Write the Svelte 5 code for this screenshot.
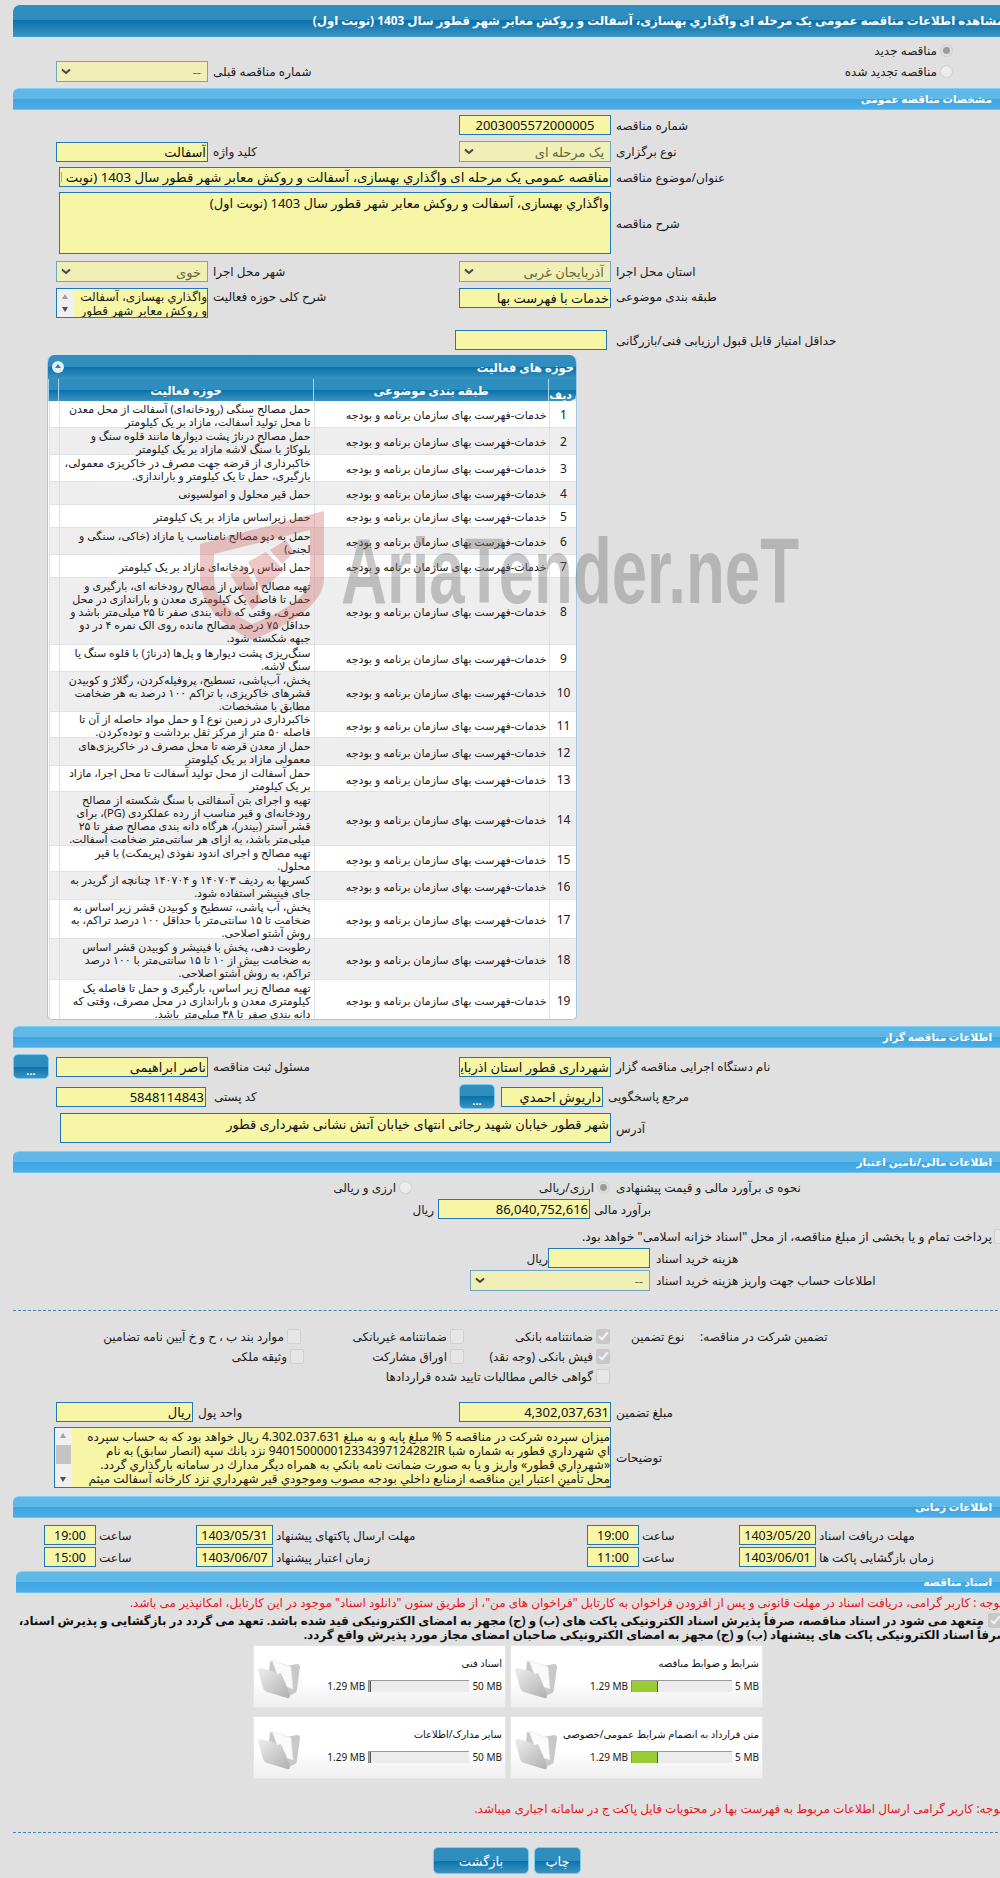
<script>
  const category = 'خدمات-فهرست بهای سازمان برنامه و بودجه';

  // each row keeps the same line breaks as the page
  const activities = [
    { h: 27, lines: ['حمل مصالح سنگی (رودخانه‌ای) آسفالت از محل معدن', 'تا محل تولید آسفالت، مازاد بر یک کیلومتر'] },
    { h: 27, lines: ['حمل مصالح درناژ پشت دیوارها مانند قلوه سنگ و', 'بلوکاژ با سنگ لاشه مازاد بر یک کیلومتر'] },
    { h: 27, lines: ['خاکبرداری از قرضه  جهت مصرف در خاکریزی معمولی،', 'بارگیری، حمل تا یک کیلومتر و باراندازی.'] },
    { h: 23, lines: ['حمل قیر محلول و امولسیونی'] },
    { h: 23, lines: ['حمل زیراساس مازاد بر یک کیلومتر'] },
    { h: 27, lines: ['حمل به دپو مصالح نامناسب یا مازاد (خاکی، سنگی و', 'لجنی)'] },
    { h: 23, lines: ['حمل اساس رودخانه‌ای مازاد بر یک کیلومتر'] },
    { h: 67, lines: ['تهیه مصالح اساس از مصالح رودخانه ای، بارگیری و', 'حمل تا فاصله یک کیلومتری معدن و باراندازی در محل', 'مصرف، وقتی که دانه بندی صفر تا ۲۵ میلی‌متر باشد و', 'حداقل ۷۵ درصد مصالح مانده روی الک نمره ۴ در دو', 'جبهه  شکسته شود.'] },
    { h: 27, lines: ['سنگ‌ریزی پشت دیوارها و پل‌ها (درناژ) با قلوه سنگ یا', 'سنگ لاشه.'] },
    { h: 40, lines: ['پخش، آب‌پاشی، تسطیح، پروفیله‌کردن، رگلاژ و کوبیدن', 'قشرهای خاکریزی، با تراکم ۱۰۰ درصد به هر ضخامت', 'مطابق با مشخصات.'] },
    { h: 26, lines: ['خاکبرداری در زمین نوع I و حمل مواد حاصله از آن تا', 'فاصله ۵۰ متر از مرکز ثقل برداشت و توده‌کردن.'] },
    { h: 28, lines: ['حمل از معدن قرضه تا محل مصرف در خاکریزی‌های', 'معمولی مازاد بر یک کیلومتر'] },
    { h: 26, lines: ['حمل آسفالت از محل تولید آسفالت تا محل اجرا، مازاد', 'بر یک کیلومتر'] },
    { h: 54, lines: ['تهیه و اجرای بتن آسفالتی با سنگ شکسته از مصالح', 'رودخانه‌ای و قیر مناسب از رده عملکردی (PG)، برای', 'قشر آستر (بیندر)، هرگاه دانه بندی مصالح صفر تا ۲۵', 'میلی‌متر باشد، به ازای هر سانتی‌متر ضخامت آسفالت.'] },
    { h: 26, lines: ['تهیه مصالح و اجرای اندود نفوذی (پریمکت) با قیر', 'محلول.'] },
    { h: 28, lines: ['کسریها به ردیف ۱۴۰۷۰۳ و ۱۴۰۷۰۴ چنانچه از گریدر به', 'جای فینیشر استفاده شود.'] },
    { h: 39, lines: ['پخش، آب پاشی، تسطیح و کوبیدن قشر زیر اساس به', 'ضخامت تا ۱۵ سانتی‌متر با حداقل ۱۰۰ درصد تراکم، به', 'روش آشتو اصلاحی.'] },
    { h: 41, lines: ['رطوبت دهی، پخش با فینیشر  و کوبیدن قشر اساس', 'به ضخامت بیش از ۱۰ تا ۱۵ سانتی‌متر با ۱۰۰ درصد', 'تراکم، به روش آشتو اصلاحی.'] },
    { h: 40, lines: ['تهیه مصالح زیر اساس، بارگیری و حمل تا فاصله یک', 'کیلومتری معدن و باراندازی در محل مصرف، وقتی که', 'دانه بندی صفر تا ۳۸ میلی‌متر باشد.'] },
  ];

  const docs = [
    { title: 'اسناد فنی', max: '50 MB', pct: 3 },
    { title: 'شرایط و ضوابط مناقصه', max: '5 MB', pct: 27 },
    { title: 'سایر مدارک/اطلاعات', max: '50 MB', pct: 3 },
    { title: 'متن قرارداد به انضمام شرایط عمومی/خصوصی', max: '5 MB', pct: 27 },
  ];

  const guarantee = [
    [{ t: 'ضمانتنامه بانکی', on: true }, { t: 'ضمانتنامه غیربانکی' }, { t: 'موارد بند ب ، ح و خ آیین نامه تضامین' }],
    [{ t: 'فیش بانکی (وجه نقد)', on: true }, { t: 'اوراق مشارکت' }, { t: 'وثیقه ملکی' }],
    [{ t: 'گواهی خالص مطالبات تایید شده قراردادها' }],
  ];
</script>

{#snippet chevron()}
  <svg class="chev" viewBox="0 0 10 7" width="10" height="7"><path d="M1 1.5 L5 5 L9 1.5" fill="none" stroke="#444" stroke-width="2" /></svg>
{/snippet}

{#snippet folder()}
  <svg class="folder" viewBox="0 0 44 40" width="44" height="40">
    <defs>
      <linearGradient id="fold" x1="0" y1="0" x2="1" y2="1">
        <stop offset="0" stop-color="#eeeeee" />
        <stop offset="1" stop-color="#b0b0b0" />
      </linearGradient>
    </defs>
    <path d="M13 2 L30 7 L40 5 Q43 5 43 8 L40 30 Q40 33 38 34 L30 38 L12 12 Z" fill="#c8c8c8" />
    <path d="M15 1 L34 8 L36 30 L24 26 Z" fill="#fafafa" stroke="#e4e4e4" stroke-width="0.6" />
    <path d="M1 11 Q1 9 4 9 L15 12 Q18 13 20 15 L24 14 Q29 24 33 37 Q33 40 30 39 L10 33 Q7 32 6 29 Z" fill="url(#fold)" />
  </svg>
{/snippet}

<div class="page" dir="ltr">
  <div class="sheet">
    <h1 class="title-bar" dir="rtl">مشاهده اطلاعات مناقصه عمومی یک مرحله ای واگذاري بهسازی، آسفالت و روکش معابر شهر قطور سال 1403 (نوبت اول)</h1>

    <div class="radio-top" dir="rtl">
      <span class="radio on"></span><span>مناقصه جدید</span>
    </div>
    <div class="renew">
      <div class="select">{@render chevron()}<span>--</span></div>
      <div class="renew-right">
        <span class="label" dir="rtl">شماره مناقصه قبلی</span>
        <div class="radio-line" dir="rtl"><span class="radio"></span><span>مناقصه تجدید شده</span></div>
      </div>
    </div>

    <h2 class="section" dir="rtl">مشخصات مناقصه عمومی</h2>

    <div class="form">
      <div class="row">
        <span></span><span></span>
        <input class="field ltr-num" readonly value="2003005572000005" />
        <span class="label" dir="rtl">شماره مناقصه</span>
      </div>
      <div class="row">
        <input class="field" dir="rtl" readonly value="آسفالت" />
        <span class="label" dir="rtl">کلید واژه</span>
        <div class="select" dir="ltr">{@render chevron()}<span dir="rtl">یک مرحله ای</span></div>
        <span class="label" dir="rtl">نوع برگزاری</span>
      </div>
      <div class="row tight">
        <input class="field wide subject" dir="rtl" readonly value="مناقصه عمومی یک مرحله ای واگذاري بهسازی، آسفالت و روکش معابر شهر قطور سال 1403 (نوبت اول)" />
        <span class="label" dir="rtl">عنوان/موضوع مناقصه</span>
      </div>
      <div class="row tight">
        <div class="field wide area desc" dir="rtl">واگذاري بهسازی، آسفالت و روکش معابر شهر قطور سال 1403 (نوبت اول)</div>
        <span class="label" dir="rtl">شرح مناقصه</span>
      </div>
      <div class="row loose">
        <div class="select">{@render chevron()}<span dir="rtl">خوی</span></div>
        <span class="label" dir="rtl">شهر محل اجرا</span>
        <div class="select">{@render chevron()}<span dir="rtl">آذربایجان غربی</span></div>
        <span class="label" dir="rtl">استان محل اجرا</span>
      </div>
      <div class="row top">
        <div class="listbox">
          <div class="scroll small"><i class="up"></i><i class="down"></i></div>
          <div class="list-text" dir="rtl">واگذاري بهسازی، آسفالت<br />و روکش معابر شهر قطور</div>
        </div>
        <span class="label" dir="rtl">شرح کلی حوزه فعالیت</span>
        <input class="field" dir="rtl" readonly value="خدمات با فهرست بها" />
        <span class="label" dir="rtl">طبقه بندی موضوعی</span>
      </div>
      <div class="row score-row">
        <span></span><span></span>
        <input class="field score" readonly value="" />
        <span class="label" dir="rtl">حداقل امتیاز قابل قبول ارزیابی فنی/بازرگانی</span>
      </div>
    </div>

    <section class="panel">
      <div class="panel-head" dir="rtl">
        <span>حوزه های فعالیت</span>
        <span class="toggle"></span>
      </div>
      <table dir="rtl">
        <colgroup>
          <col class="c-num" /><col class="c-cat" /><col class="c-act" /><col class="c-gap" />
        </colgroup>
        <thead>
          <tr>
            <th class="th-num">ردیف</th>
            <th>طبقه بندی موضوعی</th>
            <th>حوزه فعالیت</th>
            <th></th>
          </tr>
        </thead>
        <tbody>
          {#each activities as a, i}
            <tr class:alt={i % 2 === 1} style="height: {a.h}px">
              <td class="num">{i + 1}</td>
              <td class="cat">{category}</td>
              <td class="act">{#each a.lines as line}<div>{line}</div>{/each}</td>
              <td></td>
            </tr>
          {/each}
        </tbody>
      </table>
    </section>

    <h2 class="section mt-6" dir="rtl">اطلاعات مناقصه گزار</h2>

    <div class="org">
      <div class="org-row">
        <button class="btn dots">...</button>
        <input class="field f152" dir="rtl" readonly value="ناصر ابراهیمی" />
        <span class="label gap-left" dir="rtl">مسئول ثبت مناقصه</span>
        <input class="field f152" dir="rtl" readonly value="شهرداری قطور استان اذربایجان غربی" />
        <span class="label" dir="rtl">نام دستگاه اجرایی مناقصه گزار</span>
      </div>
      <div class="org-row two">
        <input class="field postal" dir="rtl" readonly value="5848114843" />
        <span class="label gap-left2" dir="rtl">کد پستی</span>
        <button class="btn dots">...</button>
        <input class="field f102" dir="rtl" readonly value="داریوش احمدي" />
        <span class="label" dir="rtl">مرجع پاسخگویی</span>
      </div>
      <div class="row address">
        <div class="field wide area addr" dir="rtl">شهر قطور خیابان شهید رجائی انتهای خیابان آتش نشانی شهرداری قطور</div>
        <span class="label" dir="rtl">آدرس</span>
      </div>
    </div>

    <h2 class="section mt-8" dir="rtl">اطلاعات مالی/تامین اعتبار</h2>

    <div class="money">
      <div class="est-type">
        <div class="radio-line" dir="rtl"><span class="radio"></span><span>ارزی و ریالی</span></div>
        <div class="radio-line" dir="rtl"><span class="radio on"></span><span>ارزی/ریالی</span></div>
        <span class="label" dir="rtl">نحوه ی برآورد مالی و قیمت پیشنهادی</span>
      </div>
      <div class="est-amount">
        <span class="rial" dir="rtl">ریال</span>
        <input class="field f152" dir="rtl" readonly value="86,040,752,616" />
        <span class="label" dir="rtl">برآورد مالی</span>
      </div>
      <div class="treasury" dir="rtl">
        <span class="check"></span>
        <span>پرداخت تمام و یا بخشی از مبلغ مناقصه، از محل "اسناد خزانه اسلامی" خواهد بود.</span>
      </div>
      <div class="fee">
        <span class="rial" dir="rtl">ریال</span>
        <input class="field f102" readonly value="" />
        <span class="label" dir="rtl">هزینه خرید اسناد</span>
      </div>
      <div class="fee account">
        <div class="select f180">{@render chevron()}<span>--</span></div>
        <span class="label" dir="rtl">اطلاعات حساب جهت واریز هزینه خرید اسناد</span>
      </div>
    </div>

    <div class="dash"></div>

    <div class="guarantee">
      {#each guarantee as line, r}
        <div class="g-line">
          {#each line as item}
            <div class="g-item" dir="rtl">
              <span class="check" class:on={item.on}></span><span>{item.t}</span>
            </div>
          {/each}
          {#if r === 0}
            <span class="label g-kind" dir="rtl">نوع تضمین</span>
            <span class="label g-head" dir="rtl">تضمین شرکت در مناقصه:</span>
          {/if}
        </div>
      {/each}
    </div>

    <div class="form amount">
      <div class="row">
        <input class="field unit" dir="rtl" readonly value="ریال" />
        <span class="label unit-label" dir="rtl">واحد پول</span>
        <input class="field" dir="rtl" readonly value="4,302,037,631" />
        <span class="label" dir="rtl">مبلغ تضمین</span>
      </div>
      <div class="row tight">
        <div class="notes">
          <div class="scroll"><i class="up"></i><b></b><i class="down"></i></div>
          <div class="notes-text" dir="rtl">
            <div>میزان سپرده شرکت در مناقصه 5 % مبلغ پایه و به مبلغ 4.302.037.631 ریال خواهد بود که به حساب سپرده</div>
            <div>اي شهرداري قطور به شماره شبا 940150000012334397124282IR نزد بانك سپه (انصار سابق) به نام</div>
            <div>«شهرداري قطور» واريز و يا به صورت ضمانت نامه بانكي به همراه ديگر مدارك در سامانه بارگذاري گردد.</div>
            <div>محل تأمين اعتبار اين مناقصه ازمنابع داخلي بودجه مصوب وموجودي قير شهرداري نزد كارخانه آسفالت ميثم</div>
            <div>آسفالت تأمين خواهد شد.</div>
          </div>
        </div>
        <span class="label" dir="rtl">توضیحات</span>
      </div>
    </div>

    <h2 class="section mt-8" dir="rtl">اطلاعات زمانی</h2>

    <div class="times">
      <div class="time-row">
        <input class="time" readonly value="19:00" />
        <span class="label t-hour" dir="rtl">ساعت</span>
        <input class="date" readonly value="1403/05/31" />
        <span class="label t-left" dir="rtl">مهلت ارسال پاکتهای پیشنهاد</span>
        <input class="time" readonly value="19:00" />
        <span class="label t-hour" dir="rtl">ساعت</span>
        <input class="date" readonly value="1403/05/20" />
        <span class="label" dir="rtl">مهلت دریافت اسناد</span>
      </div>
      <div class="time-row">
        <input class="time" readonly value="15:00" />
        <span class="label t-hour" dir="rtl">ساعت</span>
        <input class="date" readonly value="1403/06/07" />
        <span class="label t-left" dir="rtl">زمان اعتبار پیشنهاد</span>
        <input class="time" readonly value="11:00" />
        <span class="label t-hour" dir="rtl">ساعت</span>
        <input class="date" readonly value="1403/06/01" />
        <span class="label" dir="rtl">زمان بازگشایی پاکت ها</span>
      </div>
    </div>

    <h2 class="section docs-bar" dir="rtl">اسناد مناقصه</h2>

    <p class="note red note-top" dir="rtl">توجه : کاربر گرامی، دریافت اسناد در مهلت قانونی و پس از افزودن فراخوان به کارتابل "فراخوان های من"، از طریق ستون "دانلود اسناد" موجود در این کارتابل، امکانپذیر می باشد.</p>
    <div class="pledge" dir="rtl">
      <div class="pledge-line"><span class="check on"></span><span>متعهد می شود در اسناد مناقصه، صرفاً پذیرش اسناد الکترونیکی پاکت های (ب) و (ج) مجهز به امضای الکترونیکی قید شده باشد. تعهد می گردد در بازگشایی و پذیرش اسناد،</span></div>
      <div class="pledge-line">صرفاً اسناد الکترونیکی پاکت های پیشنهاد (ب) و (ج) مجهز به امضای الکترونیکی صاحبان امضای مجاز مورد پذیرش واقع گردد.</div>
    </div>

    <div class="cards">
      {#each docs as doc}
        <div class="card">
          {@render folder()}
          <div class="card-body">
            <div class="card-title" dir="rtl">{doc.title}</div>
            <div class="usage">
              <span>1.29 MB</span>
              <div class="track"><div class="used" style="width: {doc.pct}%"></div></div>
              <span>{doc.max}</span>
            </div>
          </div>
        </div>
      {/each}
    </div>

    <p class="note red note-end" dir="rtl">توجه: کاربر گرامی ارسال اطلاعات مربوط به فهرست بها در محتویات فایل پاکت ج در سامانه اجباری میباشد.</p>

    <div class="dash bottom"></div>

    <div class="actions">
      <button class="btn back">بازگشت</button>
      <button class="btn print">چاپ</button>
    </div>
  </div>

  <!-- site watermark sits over the table -->
  <svg class="mark" viewBox="0 0 610 140" width="610" height="140">
    <path fill="rgba(205,90,90,0.34)" fill-rule="evenodd" d="M0 36 L124 3 L124 72 Q122 104 52 132 Q2 108 0 72 Z M14 46 L14 72 Q16 98 52 116 Q108 94 110 72 L110 22 Z" />
    <path fill="rgba(205,90,90,0.34)" d="M30 66 L44 58 L62 92 L52 102 Z M48 54 L66 44 L84 62 L62 82 Z M70 42 L86 32 L94 44 L82 56 Z" />
    <text x="141" y="95" textLength="458" lengthAdjust="spacingAndGlyphs">AriaTender.neT</text>
  </svg>
</div>

<style>
  :global(body) {
    margin: 0;
    background: #e0e0e0;
  }

  .page {
    position: relative;
    width: 1000px;
    height: 1878px;
    overflow: hidden;
    font-family: "Noto Sans", "DejaVu Sans", sans-serif;
    font-size: 12px;
    color: #1a1a1a;
  }

  .sheet {
    margin-left: 13px;
    width: 995px;
    padding-top: 5px;
  }

  .title-bar {
    margin: 0;
    height: 32px;
    box-sizing: border-box;
    padding: 0 4px 0 0;
    line-height: 30px;
    font-size: 11.8px;
    font-weight: 700;
    color: #fff;
    white-space: nowrap;
    overflow: hidden;
    border-radius: 7px 0 0 0;
    border-bottom: 1px solid #3a9ee0;
    background: linear-gradient(#2d8fc0 0, #2f8dbd 50%, #0a71aa 50%, #3b93c0 100%);
  }

  .section {
    margin: 6px 0 0;
    height: 22px;
    box-sizing: border-box;
    padding-right: 16px;
    line-height: 20px;
    font-size: 10.5px;
    font-weight: 700;
    color: #fff;
    border-radius: 6px 0 0 0;
    border-top: 1px solid #7dd3f3;
    border-bottom: 1px solid #6cc4ee;
    background: linear-gradient(#5fb8e8 0, #60b8e8 50%, #3ea4e2 50%, #4aaee6 100%);
  }

  .mt-6 { margin-top: 6px; }
  .mt-8 { margin-top: 8px; }

  .radio-top {
    display: flex;
    align-items: center;
    gap: 3px;
    height: 14px;
    margin-top: 6px;
    padding-right: 55px;
  }

  .radio {
    flex-shrink: 0;
    width: 11px;
    height: 11px;
    border: 1px solid #cfcfcf;
    border-radius: 50%;
    background: #ececec;
  }

  .radio.on {
    background: radial-gradient(circle, #9a9a9a 0 3px, #dedede 4px);
  }

  .radio-line {
    display: flex;
    align-items: center;
    gap: 3px;
    white-space: nowrap;
  }

  .renew {
    display: grid;
    grid-template-columns: 152px 1fr;
    margin: 4px 0 0 43px;
    height: 21px;
  }

  .renew-right {
    display: flex;
    justify-content: space-between;
    align-items: center;
    padding: 0 55px 0 5px;
  }

  .select {
    display: flex;
    justify-content: space-between;
    align-items: center;
    height: 21px;
    box-sizing: border-box;
    padding: 0 6px 0 4px;
    border: 1px solid #6fa3c8;
    background: #f0efb6;
    color: #66663f;
    font-size: 13px;
  }

  .chev { flex-shrink: 0; }

  .field {
    display: block;
    width: 100%;
    height: 20px;
    box-sizing: border-box;
    margin: 0;
    padding: 0 1px;
    border: 1px solid #1f77b4;
    border-radius: 0;
    outline: none;
    background: #f7f5a6;
    color: #111;
    font: inherit;
    font-size: 13px;
  }

  .subject { font-size: 13.3px; }

  .ltr-num {
    text-align: center;
    font-size: 13px;
  }

  .form {
    display: flex;
    flex-direction: column;
    gap: 6px;
    padding: 5px 0 0 43px;
  }

  .row {
    display: grid;
    grid-template-columns: 152px 251px 152px 1fr;
    align-items: center;
  }

  .row.tight { margin-top: -1px; }
  .row.loose { margin-top: 1px; }
  .row.top { align-items: start; }

  .row .label { padding-left: 5px; }

  .label {
    text-align: left;
    white-space: nowrap;
  }

  .wide {
    grid-column: 1 / 4;
    margin-left: 3px;
    width: auto;
  }

  .area {
    height: 62px;
    white-space: nowrap;
    overflow: hidden;
    line-height: 17px;
  }

  .desc { padding-top: 2px; }

  .listbox {
    display: flex;
    height: 30px;
    box-sizing: border-box;
    border: 1px solid #1f77b4;
    background: #f7f5a6;
    overflow: hidden;
  }

  .list-text {
    flex: 1;
    padding-top: 1px;
    line-height: 14px;
    white-space: nowrap;
    font-size: 12px;
  }

  .scroll {
    flex-shrink: 0;
    position: relative;
    width: 17px;
    background: #f0f0f0;
  }

  .scroll i {
    position: absolute;
    left: 5px;
    width: 0;
    height: 0;
    border-left: 3.5px solid transparent;
    border-right: 3.5px solid transparent;
  }

  .scroll .up { top: 5px; border-bottom: 5px solid #a0a0a0; }
  .scroll .down { bottom: 5px; border-top: 5px solid #505050; }

  .scroll b {
    position: absolute;
    top: 17px;
    left: 1px;
    right: 1px;
    height: 19px;
    background: #c4c4c4;
  }

  .score-row { margin-top: 6px; }
  .score { margin-left: -4px; }
  .score-row .label { padding-left: 5px; }

  .panel {
    margin: 5px 0 0 34px;
    width: 530px;
    height: 665px;
    box-sizing: border-box;
    border: 1px solid #9ccbe8;
    border-top: 0;
    border-radius: 7px 7px 5px 5px;
    overflow: hidden;
    background: #fff;
  }

  .panel-head {
    display: flex;
    justify-content: space-between;
    align-items: center;
    height: 24px;
    padding: 0 2px 0 4px;
    font-size: 11.5px;
    font-weight: 700;
    color: #fff;
    background: linear-gradient(#2d8fc0 0, #2f8dbd 50%, #0a71aa 50%, #3b93c0 100%);
  }

  .toggle {
    position: relative;
    width: 12px;
    height: 12px;
    border-radius: 50%;
    background: #e6eef4;
  }

  .toggle::after {
    content: "";
    position: absolute;
    left: 3px;
    top: 3px;
    border-left: 3px solid transparent;
    border-right: 3px solid transparent;
    border-bottom: 4px solid #2a86b8;
  }

  table {
    width: 100%;
    table-layout: fixed;
    border-collapse: collapse;
    font-size: 11px;
    line-height: 13px;
  }

  .c-num { width: 30px; }
  .c-cat { width: 235px; }
  .c-act { width: 255px; }
  .c-gap { width: 10px; }

  th {
    height: 22px;
    padding: 0;
    border-left: 1px solid #a9d4ea;
    font-size: 11.5px;
    font-weight: 700;
    color: #fff;
    background: linear-gradient(#2d8fc0 0, #2f8dbd 50%, #0a71aa 50%, #3b93c0 100%);
  }

  .th-num {
    vertical-align: bottom;
    font-size: 11px;
    white-space: nowrap;
  }

  td {
    padding: 0;
    box-shadow: inset 1px -1px 0 #dfe3e6;
    white-space: nowrap;
  }

  tr.alt td { background: #eeeeee; }

  .num {
    text-align: center;
    font-size: 12px;
  }

  .cat { padding-right: 2px; }
  .act { padding-right: 3px; }

  .org {
    padding-top: 6px;
  }

  .org-row {
    display: flex;
    align-items: center;
    height: 25px;
  }

  .org-row.two {
    margin-top: 5px;
  }

  .btn {
    border: 1px solid #79cdf0;
    border-radius: 5px;
    color: #fff;
    font: inherit;
    background: linear-gradient(#2d8fc0 0, #2f8dbd 50%, #0a71aa 50%, #3b93c0 100%);
    padding: 0;
  }

  .dots {
    flex-shrink: 0;
    width: 36px;
    height: 25px;
    font-weight: 700;
    font-size: 11px;
    line-height: 24px;
    padding-top: 4px;
  }

  .f152 { width: 152px; }
  .f102 { width: 102px; }
  .f180 { width: 180px; }

  .org-row .f152:first-of-type { margin-left: 7px; }
  .org-row .label { margin-left: 5px; }
  .gap-left { width: 246px; }

  .postal {
    width: 150px;
    margin-left: 43px;
  }

  .org-row .gap-left2 {
    margin-left: 8px;
    width: 245px;
  }

  .org-row.two .f102 { margin-left: 6px; }

  .address {
    padding-left: 43px;
    margin-top: 4px;
    align-items: center;
  }

  .address .wide { margin-left: 4px; }

  .addr {
    height: 30px;
    line-height: 16px;
    padding-top: 2px;
  }

  .money {
    height: 130px;
    padding-top: 7px;
    box-sizing: border-box;
  }

  .est-type {
    display: flex;
    align-items: center;
    height: 14px;
    padding-left: 324px;
  }

  .est-type .radio-line:first-child { width: 75px; }
  .est-type .radio-line:nth-child(2) { width: 67px; margin-left: 131px; }
  .est-type .label { margin-left: 6px; }

  .rial {
    flex-shrink: 0;
    width: 20px;
    text-align: left;
  }

  .est-amount {
    display: flex;
    align-items: center;
    gap: 4px;
    margin-top: 5px;
    padding-left: 401px;
  }

  .treasury {
    display: flex;
    align-items: center;
    gap: 2px;
    margin-top: 10px;
    height: 14px;
    white-space: nowrap;
    font-size: 12.4px;
  }

  .fee {
    display: flex;
    align-items: center;
    margin-top: 5px;
    padding-left: 515px;
  }

  .fee .f102 { margin: 0 6px 0 0; }

  .account {
    margin-top: 2px;
    padding-left: 457px;
  }

  .account .label { margin-left: 6px; }

  .check {
    position: relative;
    flex-shrink: 0;
    width: 12px;
    height: 13px;
    border: 1px solid #d0d0d0;
    border-radius: 2px;
    background: #e6e6e6;
  }

  .check.on { background: #c8c8c8; border-color: #c8c8c8; }

  .check.on::after {
    content: "";
    position: absolute;
    left: 4px;
    top: 0;
    width: 3px;
    height: 8px;
    border: solid #f4f4f4;
    border-width: 0 2px 2px 0;
    transform: rotate(40deg);
  }

  .dash {
    height: 0;
    margin-top: 7px;
    border-top: 1px dashed #3d86b0;
  }

  .guarantee {
    display: flex;
    flex-direction: column;
    gap: 6px;
    height: 70px;
    margin-top: 17px;
  }

  .g-line {
    position: relative;
    height: 14px;
  }

  .g-item {
    display: flex;
    align-items: center;
    gap: 3px;
    position: absolute;
    white-space: nowrap;
  }

  .g-item:nth-child(1) { right: 398px; }
  .g-item:nth-child(2) { right: 544px; }
  .g-item:nth-child(3) { right: 707px; }
  .g-line:nth-child(2) .g-item:nth-child(3) { right: 704px; }

  .g-kind { position: absolute; left: 618px; }
  .g-head { position: absolute; left: 687px; }

  .amount { padding-top: 4px; }
  .unit { width: 137px; }
  .row .unit-label { margin-left: -15px; }

  .notes {
    grid-column: 1 / 4;
    display: flex;
    margin-left: -2px;
    height: 61px;
    box-sizing: border-box;
    border: 1px solid #1f77b4;
    background: #f7f5a6;
    overflow: hidden;
  }

  .notes-text {
    flex: 1;
    padding-top: 2px;
    line-height: 14px;
    white-space: nowrap;
    overflow: hidden;
    font-size: 12px;
  }

  .times {
    display: flex;
    flex-direction: column;
    gap: 2px;
    padding: 7px 0 0 31px;
  }

  .time-row {
    display: flex;
    align-items: center;
    height: 20px;
  }

  .time, .date {
    height: 20px;
    box-sizing: border-box;
    margin: 0;
    padding: 0;
    border: 1px solid #1f77b4;
    border-radius: 0;
    outline: none;
    background: #f7f5a6;
    text-align: center;
    font: inherit;
    font-size: 12.5px;
    color: #111;
  }

  .time { width: 52px; }
  .date { width: 77px; }

  .time-row .label { margin-left: 3px; }
  .t-hour { width: 97px; }
  .t-left { width: 311px; }

  .docs-bar {
    margin: 4px 0 0 3px;
  }

  .note {
    margin: 0;
    white-space: nowrap;
    padding-right: 5px;
  }

  .red { color: #e8141c; }

  .note-top {
    margin-top: 3px;
    height: 14px;
    line-height: 14px;
  }

  .pledge {
    margin-top: 3px;
    font-size: 11.9px;
    font-weight: 700;
    line-height: 14px;
    white-space: nowrap;
    color: #111;
  }

  .pledge-line {
    display: flex;
    align-items: center;
    gap: 4px;
    height: 14px;
  }

  .pledge-line .check { margin-right: 6px; }

  .cards {
    display: grid;
    grid-template-columns: 253px 253px;
    gap: 8px 4px;
    margin: 4px 0 0 240px;
  }

  .card {
    display: flex;
    height: 63px;
    box-sizing: border-box;
    padding: 13px 3px 0 3px;
    border: 1px solid #e6e6e6;
    background: linear-gradient(#fff 55%, #efefef 100%);
  }

  .folder { flex-shrink: 0; }

  .card-body {
    flex: 1;
    display: flex;
    flex-direction: column;
    font-size: 10px;
  }

  .card-title {
    height: 22px;
    margin-top: -3px;
    white-space: nowrap;
    font-size: 10px;
    color: #111;
  }

  .usage {
    display: flex;
    justify-content: flex-end;
    align-items: center;
    gap: 3px;
    margin-top: 1px;
  }

  .track {
    width: 101px;
    height: 11px;
    border-top: 1px solid #9a9a9a;
    background: #ececec;
  }

  .used {
    height: 100%;
    background: #9c3;
    border-left: 1px solid #888;
    border-right: 1px solid #555;
    box-sizing: border-box;
  }

  .note-end {
    margin-top: 23px;
    height: 14px;
    line-height: 14px;
  }

  .bottom { margin-top: 16px; }

  .actions {
    display: flex;
    gap: 5px;
    margin: 14px 0 0 420px;
  }

  .back { width: 96px; height: 27px; font-size: 13px; }
  .print { width: 47px; height: 27px; font-size: 13px; }

  .mark {
    position: absolute;
    left: 200px;
    top: 508px;
    pointer-events: none;
  }

  .mark text {
    font-family: "Liberation Sans", sans-serif;
    font-weight: 700;
    font-size: 92px;
    fill: rgba(110, 110, 110, 0.38);
  }
</style>
